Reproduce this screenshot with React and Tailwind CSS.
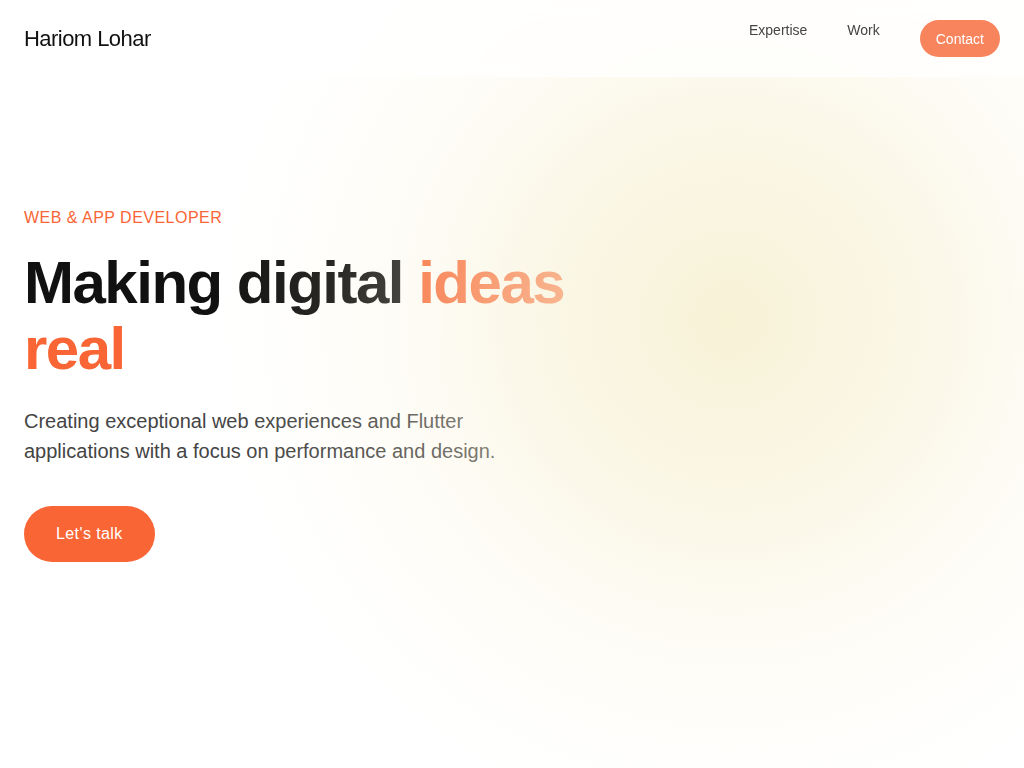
import React from "react";

const navLinks = ["Expertise", "Work"];

const App = () => {
  return (
    <div className="relative min-h-screen overflow-hidden bg-white font-['Liberation_Sans',Arial,sans-serif] text-[#111]">
      {/* soft glow that washes over the hero text */}
      <div className="pointer-events-none absolute inset-0 z-10 bg-[radial-gradient(circle_at_730px_320px,rgba(247,240,210,0.9)_0px,rgba(247,240,210,0.56)_175px,rgba(247,240,210,0.28)_300px,rgba(247,240,210,0.1)_400px,rgba(247,240,210,0)_520px)]" />

      <header className="fixed inset-x-0 top-0 z-20 flex items-center justify-between bg-white/75 px-6 py-5 backdrop-blur">
        <a href="#" className="text-[22px] leading-7 tracking-tight text-[#111]">
          Hariom Lohar
        </a>
        <nav className="flex items-start gap-10 text-sm">
          {navLinks.map((link) => (
            <a key={link} href="#" className="leading-5 text-[#444]">
              {link}
            </a>
          ))}
          <a
            href="#"
            className="rounded-full bg-[#f7845c] px-4 py-[8.5px] leading-5 text-white"
          >
            Contact
          </a>
        </nav>
      </header>

      <main className="relative z-0 flex min-h-screen items-center px-6">
        <div className="flex flex-col items-start">
          <p className="mb-5 text-base leading-6 tracking-[0.03em] text-[#f96535]">
            WEB &amp; APP DEVELOPER
          </p>
          <h1 className="mb-6 max-w-xl text-[60px] font-bold leading-[66px] tracking-tight">
            <span className="text-[#111]">Making digital </span>
            <span className="text-[#f96535]">ideas real</span>
          </h1>
          <p className="max-w-lg text-xl leading-[30px] text-[#444]">
            Creating exceptional web experiences and Flutter applications with a
            focus on performance and design.
          </p>
          <a
            href="#"
            className="mt-10 rounded-full bg-[#f96535] px-8 py-4 text-base leading-6 tracking-wide text-white"
          >
            Let's talk
          </a>
        </div>
      </main>
    </div>
  );
};

export default App;
